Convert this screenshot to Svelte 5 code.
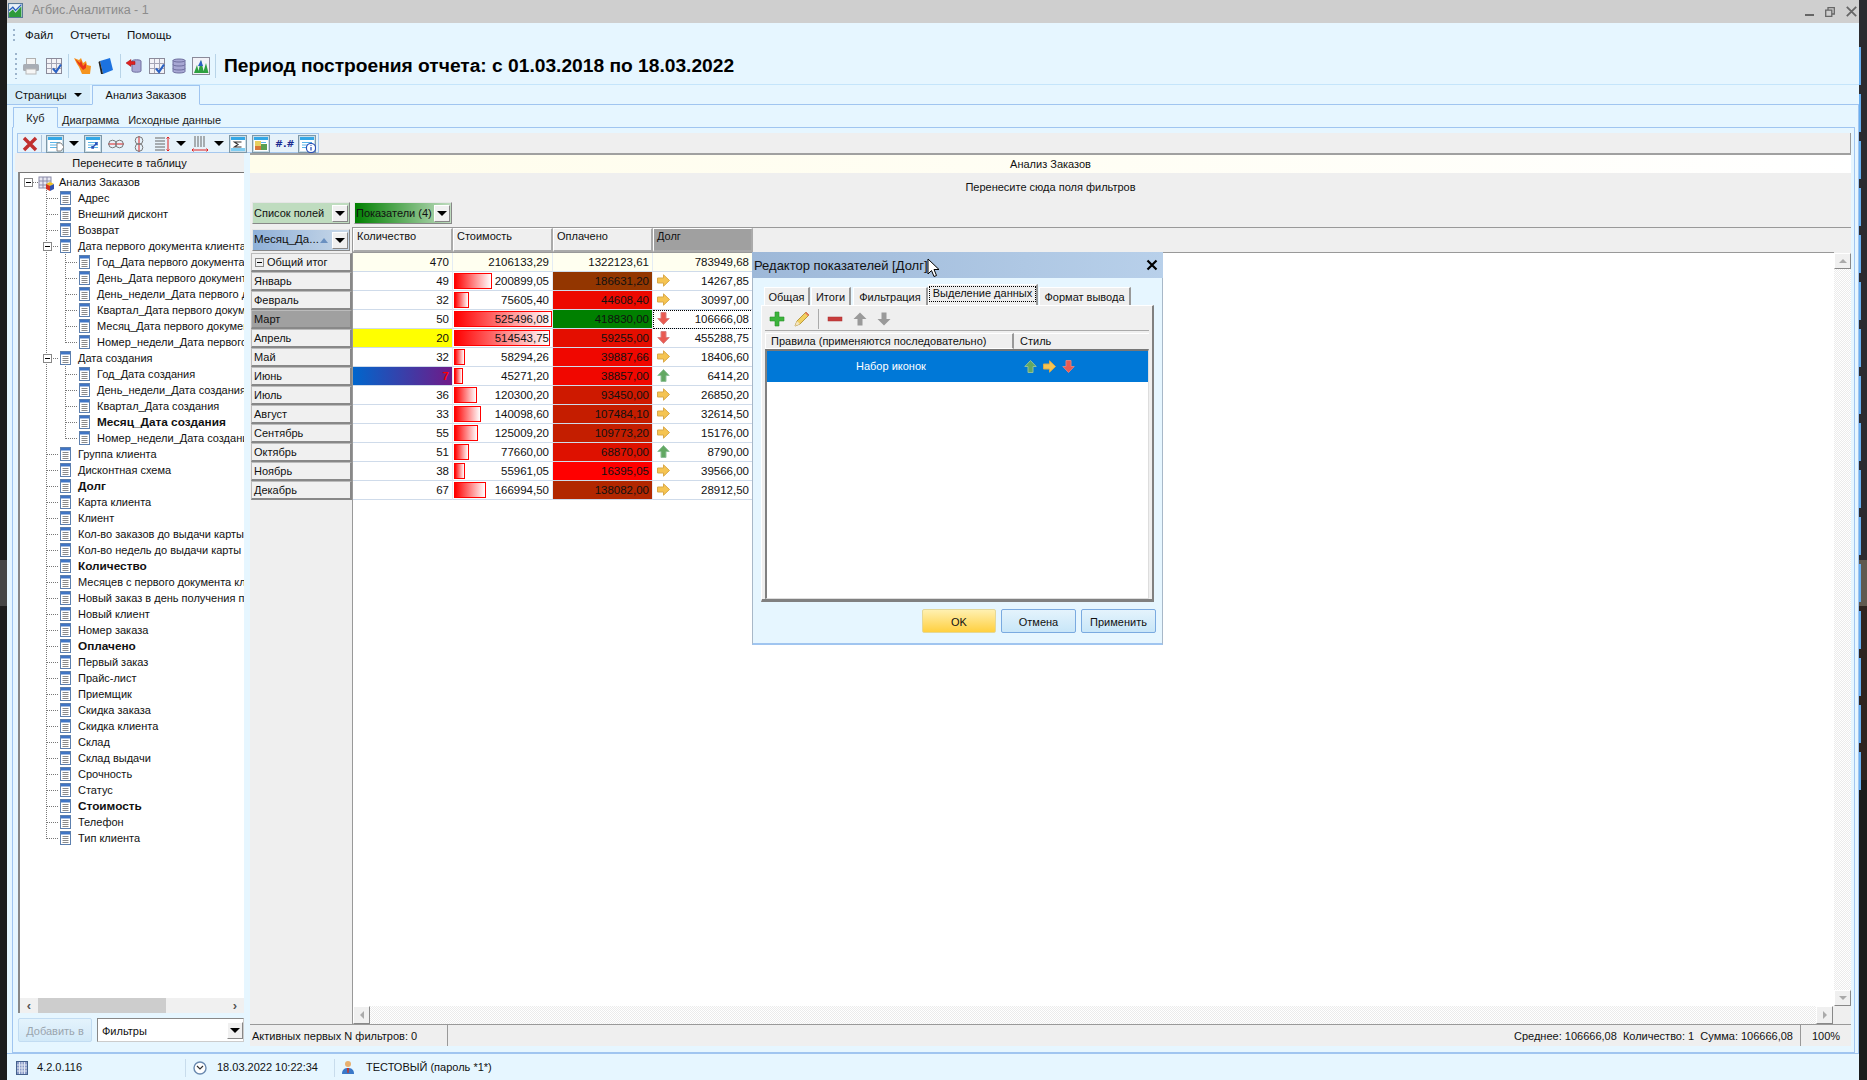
<script>
  const tree = [
    [0,'Анализ Заказов'],
    [1,'Адрес'],[1,'Внешний дисконт'],[1,'Возврат'],
    [1,'Дата первого документа клиента',0,1],
    [2,'Год_Дата первого документа'],[2,'День_Дата первого документа'],[2,'День_недели_Дата первого документа'],
    [2,'Квартал_Дата первого документа'],[2,'Месяц_Дата первого документа'],[2,'Номер_недели_Дата первого документа',0,0,1],
    [1,'Дата создания',0,1],
    [2,'Год_Дата создания'],[2,'День_недели_Дата создания'],[2,'Квартал_Дата создания'],[2,'Месяц_Дата создания',1],[2,'Номер_недели_Дата создания',0,0,1],
    [1,'Группа клиента'],[1,'Дисконтная схема'],[1,'Долг',1],[1,'Карта клиента'],[1,'Клиент'],
    [1,'Кол-во заказов до выдачи карты'],[1,'Кол-во недель до выдачи карты'],[1,'Количество',1],
    [1,'Месяцев с первого документа клиента'],[1,'Новый заказ в день получения первой'],[1,'Новый клиент'],[1,'Номер заказа'],
    [1,'Оплачено',1],[1,'Первый заказ'],[1,'Прайс-лист'],[1,'Приемщик'],[1,'Скидка заказа'],[1,'Скидка клиента'],
    [1,'Склад'],[1,'Склад выдачи'],[1,'Срочность'],[1,'Статус'],[1,'Стоимость',1],[1,'Телефон'],[1,'Тип клиента',0,0,1]
  ];
  const rows = [
    ['Январь','49','200899,05',186631.2,'r','14267,85',38],
    ['Февраль','32','75605,40',44608.4,'r','30997,00',15],
    ['Март','50','525496,08',418830,'d','106666,08',98],
    ['Апрель','20','514543,75',59255,'d','455288,75',96],
    ['Май','32','58294,26',39887.66,'r','18406,60',11],
    ['Июнь','7','45271,20',38857,'u','6414,20',9],
    ['Июль','36','120300,20',93450,'r','26850,20',23],
    ['Август','33','140098,60',107484.1,'r','32614,50',27],
    ['Сентябрь','55','125009,20',109773.2,'r','15176,00',24],
    ['Октябрь','51','77660,00',68870,'u','8790,00',15],
    ['Ноябрь','38','55961,05',16395.05,'r','39566,00',11],
    ['Декабрь','67','166994,50',138082,'r','28912,50',32]
  ];
  function paid(v){
    const t=(v-16395)/(418830-16395);
    return `rgb(${Math.round(255*(1-t))},${Math.round(128*t)},0)`;
  }
  function money(v){ return v.toFixed(2).replace('.',','); }
  const segs = Array.from({length:16});
</script>

{#snippet arrow(kind)}
  <svg class="arrow" width="13" height="13" viewBox="0 0 13 13">
    {#if kind==='r'}
      <path d="M.5 4H6.5V.8L12.5 6.5 6.5 12.2V9H.5Z" fill="#f5c452" stroke="#d9a94a"/>
    {:else if kind==='d'}
      <path d="M4 .5V6.5H.8L6.5 12.5 12.2 6.5H9V.5Z" fill="#ea5a50" stroke="#d88080"/>
    {:else}
      <path d="M4 12.5V6.5H.8L6.5 .5 12.2 6.5H9V12.5Z" fill="#62a862" stroke="#8fc09a"/>
    {/if}
  </svg>
{/snippet}

{#snippet doc()}
  <svg class="doc" width="11" height="14" viewBox="0 0 11 14">
    <rect x=".5" y=".5" width="10" height="13" fill="#fff" stroke="#5c7fae"/>
    <rect x="1" y="1" width="9" height="2.5" fill="#3f74c4"/>
    <path d="M2.5 5.5H8.5M2.5 7.5H8.5M2.5 9.5H8.5M2.5 11.5H8.5" stroke="#8a8a8a"/>
  </svg>
{/snippet}

{#snippet tick()}
  <svg class="tb" width="18" height="18" viewBox="0 0 18 18">
    <rect x="1.5" y="1.5" width="15" height="15" fill="#f3f3f7" stroke="#8a8a9a"/>
    <path d="M6.5 2V16M11.5 2V16M2 6.5H16M2 11.5H16" stroke="#a4a4b4"/>
    <path d="M8 11.5 11 15 16 7.5" fill="none" stroke="#2a62c4" stroke-width="2.2"/>
  </svg>
{/snippet}

{#snippet dbicon()}
  <svg class="tb" width="16" height="18" viewBox="0 0 16 18">
    <path d="M2 3.5C2 1.5 14 1.5 14 3.5V14.5C14 16.5 2 16.5 2 14.5Z" fill="#a8a8d4" stroke="#6e6e9e"/>
    <path d="M2 3.5C2 5.5 14 5.5 14 3.5M2 7.5C2 9.5 14 9.5 14 7.5M2 11.5C2 13.5 14 13.5 14 11.5" fill="none" stroke="#6e6e9e"/>
  </svg>
{/snippet}

{#snippet gridicon(inner)}
  <svg class="tb" width="18" height="18" viewBox="0 0 18 18">
    <rect x=".5" y=".5" width="17" height="17" fill="#c9dde8" stroke="#7e98a8"/>
    <rect x="2" y="2" width="14" height="14" fill="#fff"/>
    <rect x="2" y="2" width="14" height="3" fill="#35a8e6"/>
    <path d="M4 7.500H14M4 10H14M4 12.500H14" stroke="#5ab4e8"/>
    {#if inner==='page'}<path d="M11 8H15L18 12 15 16H11Z" fill="#fff" stroke="#888"/>{/if}
    {#if inner==='swap'}<path d="M8 13 13 8M11 8H13V10M8 11V13H10" fill="none" stroke="#2a50b8" stroke-width="1.4"/>{/if}
    {#if inner==='sum'}<rect x="2" y="5" width="14" height="8" fill="#fff"/><path d="M12.500 7H5.500L9 9.500 5.500 12H12.500" fill="none" stroke="#333" stroke-width="1.200"/><rect x="2" y="13" width="14" height="3" fill="#7fcdf2"/>{/if}
    {#if inner==='map'}<rect x="3" y="6" width="6" height="5" fill="#e8d060"/><rect x="9" y="9" width="6" height="6" fill="#58a050"/><rect x="3" y="11" width="6" height="4" fill="#d87838"/>{/if}
    {#if inner==='info'}<circle cx="13" cy="13" r="4.6" fill="#fff" stroke="#2a50b8" stroke-width="1.2"/><path d="M13 12V15.5M13 10.2V11" stroke="#2a50b8" stroke-width="1.3"/>{/if}
  </svg>
{/snippet}

{#snippet dd()}<span class="tri"></span>{/snippet}

<div class="screen">
  <div class="gutter-l">
    <div class="gl-a"></div><div class="gl-b"></div><div class="gl-c"></div>
  </div>

  <div class="win">
    <div class="titlebar">
      <svg class="appicon" width="15" height="15" viewBox="0 0 14 14">
        <rect x=".5" y=".5" width="13" height="13" fill="#e8f0f8" stroke="#5a7a98"/>
        <path d="M1 9 4.5 6 7 9 12.5 3V13H1Z" fill="#2e9a3a"/>
        <path d="M1 7 4.5 4 7 7 12.5 1.5" fill="none" stroke="#2a60c0" stroke-width="1.2"/>
      </svg>
      <span class="apptitle">Агбис.Аналитика - 1</span>
      <div class="winbtns">
        <svg width="9" height="10" viewBox="0 0 9 10"><rect y="7" width="9" height="2" fill="#666"/></svg>
        <svg width="10" height="10" viewBox="0 0 10 10"><path d="M.7 3.2H6.8V9.3H.7ZM3 3V.7H9.3V7H7" fill="none" stroke="#666" stroke-width="1.3"/></svg>
        <svg width="11" height="11" viewBox="0 0 11 11"><path d="M.8.8 10.2 10.2M10.2.8.8 10.2" stroke="#666" stroke-width="1.8"/></svg>
      </div>
    </div>

    <div class="menu">
      <span class="grip short"></span>
      <span class="mi">Файл</span><span class="mi">Отчеты</span><span class="mi">Помощь</span>
    </div>

    <div class="toolbar">
      <span class="grip"></span>
      <svg class="tb" width="18" height="18" viewBox="0 0 18 18">
        <rect x="4.5" y="1.5" width="9" height="6" fill="#f4f4f4" stroke="#b0b0b0"/>
        <rect x="1" y="7" width="16" height="7" rx="1.5" fill="#a8adb5"/>
        <rect x="4" y="12" width="10" height="5" fill="#f6f6f6" stroke="#b8b8b8"/>
      </svg>
      {@render tick()}
      <span class="vsep"></span>
      <svg class="tb" width="18" height="18" viewBox="0 0 18 18">
        <path d="M0 1 5 3 7 1 9 6 12 4 13 8 17 9 16 17 8 17 5 10 3 7Z" fill="#f5941e"/>
        <path d="M1 2 6 6 7 3 9 9 12 6 12 11 9 13 5 8Z" fill="#e8341c"/>
      </svg>
      <svg class="tb" width="18" height="18" viewBox="0 0 18 18">
        <path d="M3 4 13 1 16 13 6 17Z" fill="#1c72e0"/><path d="M3 4 6 17 4 17 1.500 5Z" fill="#222"/>
      </svg>
      <span class="vsep"></span>
      <svg class="tb back" width="18" height="18" viewBox="0 0 18 18">
        <path d="M7 4C7 2.4 16 2.4 16 4V14C16 15.6 7 15.6 7 14Z" fill="#a8a8d4" stroke="#6e6e9e"/>
        <path d="M1 6 6 2.5V4.5H10V7.500H6V9.500Z" fill="#e02020" stroke="#a01010" stroke-width=".5"/>
      </svg>
      {@render tick()}
      {@render dbicon()}
      <svg class="tb" width="18" height="18" viewBox="0 0 18 18">
        <rect x=".5" y=".5" width="17" height="17" fill="#f2f2f8" stroke="#8a8a9a"/>
        <path d="M2 16 5 8 7 16ZM6 16 9 3 12 16ZM11 16 14 6 16.500 16Z" fill="#2ea040"/>
        <path d="M6 9 9 3 11 9Z" fill="#2a60c0"/>
      </svg>
      <span class="vsep"></span>
      <span class="period">Период построения отчета: с 01.03.2018 по 18.03.2022</span>
    </div>

    <div class="tabstrip">
      <span class="pages">Страницы <span class="tri small"></span></span>
      <span class="pagetab">Анализ Заказов</span>
    </div>

    <div class="page">
      <div class="subtabs">
        <span class="subtab on">Куб</span>
        <span class="subtab">Диаграмма</span>
        <span class="subtab">Исходные данные</span>
      </div>

      <div class="panel">
        <div class="cubebar">
          <div class="cubetools">
            <span class="xbtn">
              <svg width="16" height="16" viewBox="0 0 16 16"><path d="M2 2 14 14M14 2 2 14" stroke="#c03030" stroke-width="3.4"/></svg>
            </span>
            {@render gridicon('page')}
            {@render dd()}
            {@render gridicon('swap')}
            <svg class="tb" width="18" height="18" viewBox="0 0 18 18"><path d="M1 9H17" stroke="#e02020"/><circle cx="5.500" cy="9" r="3.800" fill="none" stroke="#777"/><circle cx="12.500" cy="9" r="3.800" fill="none" stroke="#777"/></svg>
            <svg class="tb" width="18" height="18" viewBox="0 0 18 18"><path d="M9 1V17" stroke="#e02020"/><circle cx="9" cy="5.500" r="3.800" fill="none" stroke="#777"/><circle cx="9" cy="12.500" r="3.800" fill="none" stroke="#777"/></svg>
            <svg class="tb" width="18" height="18" viewBox="0 0 18 18"><path d="M2 3H12M2 6H12M2 9H12M2 12H12M2 15H12" stroke="#666"/><path d="M15 2V16M13.500 3.500 15 2 16.500 3.500M13.500 14.500 15 16 16.500 14.500" fill="none" stroke="#e02020"/></svg>
            {@render dd()}
            <svg class="tb" width="18" height="18" viewBox="0 0 18 18"><path d="M4 1V12M7 1V12M10 1V12M13 1V12" stroke="#666"/><path d="M1 15H17M2.500 13.500 1 15 2.500 16.500M15.500 13.500 17 15 15.500 16.500" fill="none" stroke="#e02020"/></svg>
            {@render dd()}
            {@render gridicon('sum')}
            {@render gridicon('map')}
            <span class="fmt">#.#</span>
            {@render gridicon('info')}
          </div>
          <div class="cubebar-rest"></div>
        </div>

        <div class="work">
          <div class="left">
            <div class="lefthead">Перенесите в таблицу</div>
            <div class="treebox">
              <div class="tree">
                {#each tree as n, i}
                  <div class="row l{n[0]}" class:last={n[4]} class:lastl1={i===tree.length-1}>
                    {#if n[0]===0}
                      <span class="ind root"><span class="exp"></span></span>
                      <svg class="cube" width="17" height="17" viewBox="0 0 17 17">
                        <rect x="1" y="3" width="12" height="11" fill="#e8e8f2" stroke="#8a8aa8"/>
                        <path d="M5 3V14M9 3V14M1 7H13M1 11H13" stroke="#8a8aa8"/>
                        <path d="M8 10 12 8 16 10 12 12Z" fill="#f0c020"/>
                        <path d="M8 10V15L12 17V12Z" fill="#d03020"/>
                        <path d="M16 10V15L12 17V12Z" fill="#3050b0"/>
                      </svg>
                    {:else if n[0]===1}
                      <span class="ind lone">{#if n[3]}<span class="exp"></span>{/if}</span>
                      {@render doc()}
                    {:else}
                      <span class="ind ltwo"></span>
                      {@render doc()}
                    {/if}
                    <span class="lbl" class:b={n[2]}>{n[1]}</span>
                  </div>
                {/each}
              </div>
              <div class="hscroll">
                <span class="chev">‹</span>
                <span class="track"><span class="thumb"></span></span>
                <span class="chev">›</span>
              </div>
            </div>
            <div class="addrow">
              <span class="addbtn">Добавить в</span>
              <span class="combo"><span class="ctext">Фильтры</span><span class="dropbtn"><span class="tri"></span></span></span>
            </div>
          </div>

          <div class="right">
            <div class="yband">Анализ Заказов</div>
            <div class="filterband">Перенесите сюда поля фильтров</div>
            <div class="fieldrow">
              <span class="field green1">Список полей<span class="dropbtn"><span class="tri"></span></span></span>
              <span class="field green2">Показатели (4)<span class="dropbtn"><span class="tri"></span></span></span>
            </div>
            <div class="pivot">
              <div class="rowcol">
                <span class="field blue">Месяц_Да...<span class="sortup"></span><span class="dropbtn"><span class="tri"></span></span></span>
                <div class="rh total"><span class="exp"></span>Общий итог</div>
                {#each rows as r}
                  <div class="rh" class:sel={r[0]==='Март'}>{r[0]}</div>
                {/each}
              </div>
              <div class="gridcol">
                <div class="headrow">
                  <span class="ch">Количество</span><span class="ch">Стоимость</span><span class="ch">Оплачено</span><span class="ch gray">Долг</span>
                </div>
                <div class="bodyrow">
                  <div class="cells">
                    <div class="tr total">
                      <span class="td">470</span><span class="td">2106133,29</span><span class="td">1322123,61</span><span class="td">783949,68</span>
                    </div>
                    {#each rows as r}
                      <div class="tr">
                        <span class="td" class:yellow={r[0]==='Апрель'} class:grad={r[0]==='Июнь'}>{r[1]}</span>
                        <span class="td cost"><span class="bar" style="width:{r[6]}px"></span><span class="num">{r[2]}</span></span>
                        <span class="td" style="background:{paid(r[3])}">{money(r[3])}</span>
                        <span class="td debt" class:focus={r[0]==='Март'}>{@render arrow(r[4])}<span>{r[5]}</span></span>
                      </div>
                    {/each}
                  </div>
                  <div class="vscroll">
                    <span class="sbtn"><span class="ta up"></span></span>
                    <span class="dither"></span>
                    <span class="sbtn"><span class="ta dn"></span></span>
                  </div>
                </div>
                <div class="hs2">
                  <span class="sbtn"><span class="ta lf"></span></span>
                  <span class="dither"></span>
                  <span class="sbtn"><span class="ta rt"></span></span>
                  <span class="corner"></span>
                </div>
              </div>
            </div>
            <div class="statusline">
              <span class="s1">Активных первых N фильтров: 0</span>
              <span class="s2">Среднее: 106666,08&nbsp;&nbsp;Количество: 1&nbsp;&nbsp;Сумма: 106666,08</span>
              <span class="s3">100%</span>
            </div>
          </div>
        </div>
      </div>
    </div>

    <div class="statusbar">
      <span class="sb sb1">
        <svg width="12" height="14" viewBox="0 0 12 14"><rect x=".5" y=".5" width="11" height="13" fill="#8a9ac8" stroke="#44608c"/><path d="M3.500 1V13M6 1V13M8.500 1V13M1 4H11M1 7H11M1 10H11" stroke="#dfe6f2"/></svg>
        4.2.0.116
      </span>
      <span class="sb sb2">
        <svg width="14" height="14" viewBox="0 0 14 14"><circle cx="7" cy="7" r="6" fill="#fff" stroke="#6a8ab0" stroke-width="1.400"/><path d="M4 5 7 8 10 5" fill="none" stroke="#333" stroke-width="1.200"/></svg>
        18.03.2022 10:22:34
      </span>
      <span class="sb sb3">
        <svg width="14" height="15" viewBox="0 0 14 15"><circle cx="7" cy="4" r="3" fill="#e8b070"/><path d="M1 14C1 9 4 8 7 8S13 9 13 14Z" fill="#3a78c8"/><path d="M6 8H8L7.500 13H6.500Z" fill="#d03020"/></svg>
        ТЕСТОВЫЙ (пароль *1*)
      </span>
    </div>
  </div>

  <div class="gutter-r">
    {#each segs as _}<span class="seg"></span>{/each}
  </div>

  <div class="dialog">
    <div class="dtitle">
      <span>Редактор показателей [Долг]</span>
      <svg width="12" height="12" viewBox="0 0 12 12"><path d="M1.500 1.500 10.500 10.500M10.500 1.500 1.500 10.500" stroke="#000" stroke-width="2.200"/></svg>
    </div>
    <div class="dbody">
      <div class="dtabs">
        <span class="dt t1">Общая</span>
        <span class="dt t2">Итоги</span>
        <span class="dt t3">Фильтрация</span>
        <span class="dt t4 on"><span class="dots">Выделение данных</span></span>
        <span class="dt t5">Формат вывода</span>
      </div>
      <div class="dpanel">
        <div class="dtools">
          <svg class="d-plus" width="16" height="16" viewBox="0 0 16 16"><path d="M6 1H10V6H15V10H10V15H6V10H1V6H6Z" fill="#3cb43c" stroke="#2a902a" stroke-width=".6"/></svg>
          <svg class="d-pen" width="18" height="18" viewBox="0 0 18 18"><path d="M2 16 4 11 13 2 16 5 7 14Z" fill="#f2d060" stroke="#b89a40"/><path d="M13 2 16 5 15 6 12 3Z" fill="#e87060"/><path d="M2 16 4 11 7 14Z" fill="#f4e4c0"/></svg>
          <span class="tsep"></span>
          <svg class="d-min" width="16" height="16" viewBox="0 0 16 16"><rect x="1" y="6" width="14" height="4" fill="#c83c3c" stroke="#a83030" stroke-width=".5"/></svg>
          <svg class="d-up" width="14" height="14" viewBox="0 0 14 14"><path d="M4.500 13.500V7H.5L7 .5 13.500 7H9.500V13.500Z" fill="#9a9a9a"/></svg>
          <svg class="d-up" width="14" height="14" viewBox="0 0 14 14"><path d="M4.500 .5V7H.5L7 13.500 13.500 7H9.500V.5Z" fill="#9a9a9a"/></svg>
        </div>
        <div class="dhead"><span class="dh1">Правила (применяются последовательно)</span><span class="dh2">Стиль</span></div>
        <div class="dlist">
          <div class="drow">
            <span class="dname">Набор иконок</span>
            <span class="dicons">{@render arrow('u')}{@render arrow('r')}{@render arrow('d')}</span>
          </div>
        </div>
      </div>
      <div class="dbtns">
        <span class="btn ok">OK</span>
        <span class="btn">Отмена</span>
        <span class="btn">Применить</span>
      </div>
    </div>
  </div>

  <svg class="cursor" width="14" height="20" viewBox="0 0 14 20">
    <path d="M1 1V16L4.500 12.500 7 18.500 9.500 17.500 7 11.500H12Z" fill="#fff" stroke="#000"/>
  </svg>
</div>

<style>
  :global(body){margin:0;background:#1e1e1e;}
  .screen{position:relative;display:flex;width:1867px;height:1080px;overflow:hidden;font:11px/1 "Liberation Sans",Arial,sans-serif;color:#111;}
  .gutter-l{width:7px;display:flex;flex-direction:column;background:#1c1c1c;flex:none;}
  .gl-a{height:560px;}
  .gl-b{height:46px;background:#454545;}
  .gl-c{flex:1;}
  .gutter-r{width:8px;display:flex;flex-direction:column;padding-top:47px;box-sizing:border-box;flex:none;background:linear-gradient(#2b2b30 0 560px,#605a50 560px 606px,#2e2420 606px 780px,#1b1b1b 780px);}
  .seg{display:block;width:2px;height:38px;margin-bottom:9px;background:#68aef0;flex:none;}
  .win{width:1852px;height:1080px;background:#e6f6ff;display:flex;flex-direction:column;flex:none;}

  .titlebar{height:23px;background:#cfcfcf;display:flex;align-items:center;padding-left:1px;box-sizing:border-box;flex:none;}
  .appicon{margin:-3px 9px 0 0;}
  .apptitle{font-size:12.500px;color:#8c8c8c;margin-top:-3px;}
  .winbtns{margin-left:auto;display:flex;align-items:center;gap:11px;padding-right:2px;}

  .menu{height:24px;display:flex;align-items:center;flex:none;padding:1px 0 0 5px;box-sizing:border-box;font-size:11.500px;}
  .mi{margin-right:17px;}
  .grip{display:block;width:2px;height:26px;margin:0 0 0 1px;background:repeating-linear-gradient(to bottom,#9cb4cc 0 2px,transparent 2px 5px);flex:none;}
  .grip.short{height:14px;margin-right:10px;}
  .toolbar{height:37px;display:flex;align-items:center;gap:5px;flex:none;padding-left:7px;box-sizing:border-box;}
  .tb{flex:none;}
  .back{margin-left:-1px;}
  .vsep{width:1px;height:24px;background:#b8d4e8;flex:none;}
  .period{font-size:19.200px;font-weight:bold;color:#000;margin-left:3px;white-space:nowrap;}

  .tabstrip{height:21px;border-top:1px solid #c5e5fb;border-bottom:1px solid #a0c5f0;display:flex;flex:none;box-sizing:border-box;align-items:flex-end;}
  .pages{width:83px;height:19px;background:#d5ecfa;padding:5px 0 0 8px;box-sizing:border-box;align-self:flex-start;white-space:nowrap;}
  .pagetab{margin-left:2px;width:108px;height:20px;background:#e6f6ff;border:1px solid #a0c5f0;border-bottom:1px solid #e6f6ff;margin-bottom:-1px;box-sizing:border-box;text-align:center;padding-top:4px;}

  .page{flex:none;height:948px;border-right:1px solid #a0c5f0;box-sizing:border-box;padding-left:5px;display:flex;flex-direction:column;}
  .subtabs{height:23px;display:flex;align-items:flex-end;flex:none;border-bottom:1px solid #a0c5f0;box-sizing:border-box;width:1843px;}
  .subtab{margin-left:9px;padding-bottom:1px;color:#222;}
  .subtab.on{margin-left:1px;width:45px;height:21px;background:#e6f6ff;border:1px solid #a0c5f0;border-bottom:1px solid #e6f6ff;margin-bottom:-1px;box-sizing:border-box;text-align:center;padding:5px 0 0;}
  .subtab:nth-child(2){margin-left:4px;}
  .panel{width:1843px;height:925px;border:1px solid #a0c5f0;border-top:0;box-sizing:border-box;padding:5px 3px 6px 2px;display:flex;flex-direction:column;flex:none;}

  .cubebar{height:20px;display:flex;flex:none;}
  .cubetools{width:302px;margin-left:2px;border:1px solid #a6c8ee;box-sizing:border-box;display:flex;align-items:center;gap:5px;background:#e6f2fa;height:20px;flex:none;padding-top:1px;}
  .xbtn{width:24px;height:18px;display:flex;align-items:center;justify-content:center;border-right:1px solid #b0c4d8;margin-right:-1px;box-sizing:border-box;flex:none;}
  .tri{display:block;width:0;height:0;border-left:5px solid transparent;border-right:5px solid transparent;border-top:5px solid #000;flex:none;}
  .tri.small{display:inline-block;margin-left:4px;vertical-align:2px;border-left-width:4px;border-right-width:4px;border-top-width:4px;}
  .fmt{font:bold 9.500px "DejaVu Sans",sans-serif;color:#1a2a90;width:18px;text-align:center;flex:none;}
  .cubebar-rest{flex:1;background:#efefef;border-right:1px solid #999;}

  .work{flex:1;display:flex;min-height:0;}
  .left{width:235px;display:flex;flex-direction:column;flex:none;}
  .lefthead{height:19px;background:#efefef;text-align:center;padding-top:5px;box-sizing:border-box;margin-right:6px;flex:none;}
  .treebox{margin:0 6px 0 3px;height:841px;display:flex;flex-direction:column;border-top:1px solid #777;border-left:2px solid #888;background:#fff;box-sizing:border-box;flex:none;}
  .tree{flex:1;overflow:hidden;padding-top:1px;min-height:0;}
  .row{height:16px;display:flex;align-items:center;white-space:nowrap;box-sizing:border-box;background-repeat:no-repeat;
    --v:repeating-linear-gradient(to bottom,#777 0 1px,transparent 1px 2px);
    --h:repeating-linear-gradient(to right,#777 0 1px,transparent 1px 2px);}
  .row.l0{background-image:var(--h);background-size:6px 1px;background-position:13px 8px;}
  .row.l1{background-image:var(--v),var(--h);background-size:1px 100%,12px 1px;background-position:26px 0,27px 8px;}
  .row.l1.lastl1{background-size:1px 9px,12px 1px;}
  .row.l2{background-image:var(--v),var(--v),var(--h);background-size:1px 100%,1px 100%,12px 1px;background-position:26px 0,45px 0,46px 8px;}
  .row.l2.last{background-size:1px 100%,1px 9px,12px 1px;}
  .ind{display:flex;flex:none;align-items:center;}
  .root{width:18px;padding-left:4px;box-sizing:border-box;}
  .lone{width:40px;padding-left:23px;box-sizing:border-box;}
  .ltwo{width:59px;}
  .exp{display:block;width:9px;height:9px;border:1px solid #888;background:#fff linear-gradient(#000,#000) center/5px 1px no-repeat;box-sizing:border-box;flex:none;}
  .cube{flex:none;margin-right:4px;}
  .doc{flex:none;margin-right:7px;}
  .lbl{padding-top:1px;}
  .b{font-weight:bold;font-size:11.800px;}
  .hscroll{height:15px;display:flex;align-items:center;background:#f0f0f0;flex:none;}
  .chev{width:18px;text-align:center;font:bold 13px/13px "Liberation Sans",sans-serif;color:#555;flex:none;}
  .track{flex:1;height:15px;display:block;}
  .thumb{display:block;width:128px;height:15px;background:#cdcdcd;}
  .addrow{display:flex;gap:5px;margin:5px 6px 0 3px;height:24px;flex:none;}
  .addbtn{width:74px;height:24px;border:1px solid #c2dcf2;border-radius:2px;background:linear-gradient(#e4f3fc,#d2e9f8);box-sizing:border-box;text-align:center;padding-top:7px;color:#9aa5ae;}
  .combo{flex:1;background:#fff;border:1px solid #888;border-right-color:#ccc;border-bottom-color:#ccc;box-sizing:border-box;height:24px;display:flex;align-items:center;padding-left:4px;justify-content:space-between;}
  .ctext{padding-top:2px;}
  .dropbtn{width:16px;height:17px;background:#f0f0f0;border:1px solid #fff;border-right-color:#888;border-bottom-color:#888;box-sizing:border-box;display:flex;align-items:center;justify-content:center;flex:none;}

  .right{flex:1;display:flex;flex-direction:column;background:#efefef;min-width:0;border-top:2px solid #a0a0a0;}
  .yband{height:18px;background:linear-gradient(90deg,#fffdeb,#fffef4 50%,#fff);text-align:center;padding-top:4px;box-sizing:border-box;flex:none;}
  .filterband{height:29px;text-align:center;padding-top:9px;box-sizing:border-box;flex:none;}
  .fieldrow{display:flex;gap:4px;padding-left:2px;height:25px;flex:none;}
  .field{width:98px;height:22px;display:flex;align-items:center;justify-content:space-between;padding:0 1px 0 1px;box-sizing:border-box;border:1px solid #e6e6e6;border-right-color:#888;border-bottom-color:#888;white-space:nowrap;flex:none;}
  .green1{background:#bfdcbf;}
  .green2{background:linear-gradient(90deg,#008000,#c0dcc0);}
  .blue{background:linear-gradient(90deg,#8fb0d8,#c8d8e8);margin:2px 0 2px 2px;font-size:11.500px;}
  .sortup{width:0;height:0;border-left:4px solid transparent;border-right:4px solid transparent;border-bottom:5px solid #6a90c0;margin-left:auto;margin-right:4px;}
  .pivot{flex:1;display:flex;min-height:0;}
  .rowcol{width:102px;flex:none;}
  .rh{width:101px;height:19px;box-sizing:border-box;background:#f0f0f0;border:1px solid #fff;border-top-color:#bbb;border-left-color:#bbb;border-right:2px solid #888;border-bottom:2px solid #888;padding:3px 0 0 2px;margin-left:1px;display:flex;align-items:flex-start;gap:3px;}
  .rh.sel{background:#a0a0a0;}
  .rh.total .exp{margin-top:1px;margin-left:1px;background-color:#f0f0f0;}
  .gridcol{flex:1;display:flex;flex-direction:column;border-left:1px solid #999;min-width:0;border-top:1px solid #999;}
  .headrow{display:flex;height:25px;border-bottom:1px solid #999;flex:none;box-sizing:border-box;margin-right:17px;}
  .ch{width:100px;height:24px;box-sizing:border-box;border:1px solid #fff;border-right:2px solid #aaa;border-bottom:2px solid #aaa;padding:2px 0 0 3px;background:#efefef;}
  .ch.gray{background:#a0a0a0;}
  .bodyrow{flex:1;display:flex;min-height:0;}
  .cells{flex:1;background:#fff;min-width:0;}
  .tr{display:flex;height:19px;}
  .td{width:100px;height:19px;box-sizing:border-box;border-right:1px solid #e4ecf4;border-bottom:1px solid #cfdbea;text-align:right;padding:4px 3px 0 0;font-size:11.500px;position:relative;background:#fff;flex:none;}
  .tr.total .td{background:#fffff0;}
  .yellow{background:#ff0!important;}
  .grad{background:linear-gradient(90deg,#0066cc,#701a88)!important;color:#f00;font-weight:bold;}
  .bar{position:absolute;left:1px;top:1px;bottom:1px;box-sizing:border-box;border:1px solid #f00;background:linear-gradient(90deg,#f00,#fff);}
  .num{position:relative;}
  .debt{display:flex;justify-content:space-between;padding-left:4px;}
  .debt .arrow{margin-top:-2px;}
  .focus{outline:1px dotted #000;outline-offset:-1px;}
  .vscroll{width:17px;display:flex;flex-direction:column;flex:none;}
  .sbtn{width:17px;height:16px;background:#f0f0f0;border:1px solid #fff;border-right-color:#888;border-bottom-color:#888;box-sizing:border-box;display:flex;align-items:center;justify-content:center;flex:none;}
  .dither{flex:1;display:block;background:repeating-conic-gradient(#fff 0 25%,#ebebeb 0 50%) 0 0/2px 2px;}
  .ta{width:0;height:0;display:block;}
  .ta.up{border:4px solid transparent;border-top:0;border-bottom:4px solid #aaa;}
  .ta.dn{border:4px solid transparent;border-bottom:0;border-top:4px solid #aaa;}
  .ta.lf{border:4px solid transparent;border-left:0;border-right:4px solid #aaa;}
  .ta.rt{border:4px solid transparent;border-right:0;border-left:4px solid #aaa;}
  .hs2{height:18px;display:flex;flex:none;}
  .hs2 .sbtn{height:18px;}
  .corner{width:18px;background:#efefef;flex:none;}
  .statusline{height:22px;display:flex;align-items:center;border-top:1px solid #999;box-sizing:border-box;flex:none;}
  .s1{width:198px;padding:1px 0 0 2px;box-sizing:border-box;line-height:20px;border-right:1px solid #999;}
  .s2{margin-left:auto;padding:1px 7px 0 0;line-height:20px;border-right:1px solid #999;}
  .s3{width:50px;padding:1px 0 0 11px;box-sizing:border-box;}

  .statusbar{flex:1;border-top:1px solid #a0c5f0;display:flex;align-items:center;padding-top:1px;box-sizing:border-box;}
  .sb{display:flex;align-items:center;box-sizing:border-box;gap:7px;}
  .sb1{width:179px;padding-left:9px;gap:9px;border-right:1px solid #c8dcec;height:18px;}
  .sb2{width:149px;padding-left:7px;border-right:1px solid #c8dcec;height:18px;gap:10px;}
  .sb3{padding-left:6px;gap:11px;}

  .dialog{position:absolute;left:752px;top:252px;width:411px;height:393px;background:#e6f6ff;box-sizing:border-box;border:1px solid #a8b8c8;border-top:0;border-bottom:2px solid #a0c5f0;display:flex;flex-direction:column;}
  .dtitle{height:26px;background:linear-gradient(90deg,#9db8d8,#b8d0ea);display:flex;align-items:center;justify-content:space-between;padding:0 5px 0 2px;font-size:13px;flex:none;margin:0 -1px;}
  .dbody{flex:1;padding:8px 8px 0 8px;display:flex;flex-direction:column;}
  .dtabs{display:flex;height:19px;padding-left:3px;flex:none;align-items:flex-end;}
  .dt{height:18px;background:#efefef;border:1px solid #fff;border-right:2px solid #999;border-bottom:0;box-sizing:border-box;text-align:center;padding-top:4px;white-space:nowrap;flex:none;}
  .t1{width:46px;margin-right:1px;}
  .t2{width:40px;margin-right:2px;}
  .t3{width:75px;}
  .t4{width:110px;margin-right:1px;}
  .t5{width:92px;}
  .dt.on{height:21px;padding-top:2px;}
  .dots{outline:1px dotted #000;display:block;height:14px;line-height:13px;margin:0 1px;}
  .dpanel{width:393px;height:297px;background:#efefef;border:1px solid #fff;border-right:2px solid #808080;border-bottom:3px solid #808080;box-sizing:border-box;padding:0 3px;display:flex;flex-direction:column;flex:none;}
  .dtools{height:25px;display:flex;align-items:center;padding:1px 0 0 4px;border-bottom:1px solid #aaa;flex:none;box-sizing:border-box;}
  .d-pen{margin-left:8px;}
  .tsep{width:1px;height:20px;background:#aaa;margin-left:7px;}
  .d-min{margin-left:8px;}
  .d-up{margin-left:10px;}
  .dhead{height:16px;display:flex;flex:none;margin-top:2px;box-sizing:border-box;}
  .dh1{width:249px;border:1px solid #fff;border-right:2px solid #999;box-sizing:border-box;padding:2px 0 0 5px;white-space:nowrap;}
  .dh2{flex:1;padding:2px 0 0 6px;border-top:1px solid #fff;}
  .dlist{flex:1;background:#fff;border-top:2px solid #777;border-left:2px solid #808080;border-right:1px solid #ddd;border-bottom:1px solid #ddd;box-sizing:border-box;}
  .drow{height:31px;background:#0078d7;color:#fff;display:flex;align-items:center;}
  .dname{margin-left:89px;width:168px;}
  .dicons{display:flex;gap:6px;}
  .dbtns{display:flex;gap:5px;justify-content:flex-end;margin-top:7px;margin-right:-2px;}
  .btn{width:75px;height:24px;border:1px solid #7aaae0;border-radius:2px;background:linear-gradient(#e4f3fc,#c8e6f8);box-sizing:border-box;text-align:center;padding-top:7px;}
  .btn.ok{width:74px;border-color:#e4d898;background:linear-gradient(#fff0b0,#ffd040);}

  .cursor{position:absolute;left:927px;top:258px;}
</style>
